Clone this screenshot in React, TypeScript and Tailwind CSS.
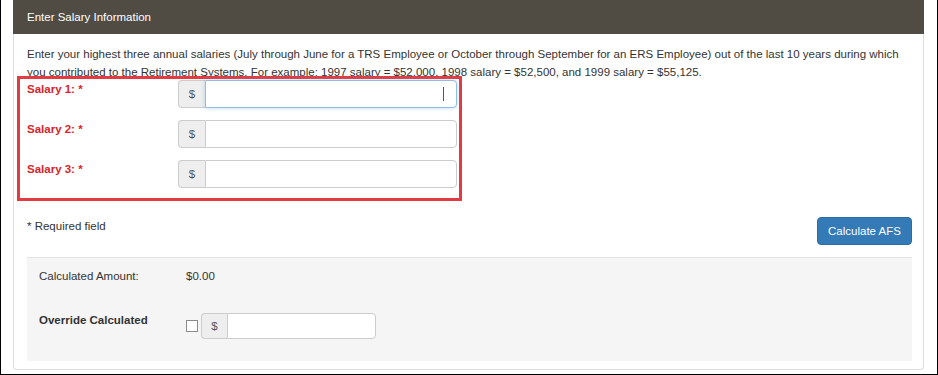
import React from "react";

function Group({
  width,
  addonW,
  height,
  focus,
}: {
  width: number;
  addonW: number;
  height: number;
  focus?: boolean;
}) {
  return (
    <div className="flex" style={{ width, height }}>
      <div
        className="flex items-center justify-center bg-[#eeeeee] border border-r-0 border-[#cccccc] rounded-l-[4px] text-[#555555] text-[11.5px]"
        style={{ width: addonW }}
      >
        $
      </div>
      <div
        className={
          "flex-1 rounded-r-[4px] bg-white border flex items-center justify-end pr-[12px] " +
          (focus
            ? "border-[#8fbde6] shadow-[0_0_4px_rgba(102,175,233,0.45)]"
            : "border-[#cccccc]")
        }
      >
        {focus && <div className="w-[1px] h-[14px] bg-[#555555]" />}
      </div>
    </div>
  );
}

export default function App() {
  const rows = ["Salary 1: *", "Salary 2: *", "Salary 3: *"];
  return (
    <div className="w-[938px] h-[375px] bg-white border-l border-r border-b border-black font-['Liberation_Sans',Arial,sans-serif] text-[11.5px] leading-[18px] text-[#333333] overflow-hidden">
      <div className="ml-[12px] w-[911px]">
        <div className="h-[34px] bg-[#504c44] px-[14px] flex items-center text-white">
          Enter Salary Information
        </div>
        <div className="border-x border-b border-[#dddddd] rounded-b-[4px] pl-[13px] pr-[11px] pt-[11px] pb-[8px]">
          <p>
            Enter your highest three annual salaries (July through June for a TRS Employee or October through
            September for an ERS Employee) out of the last 10 years during which
            <br />
            you contributed to the Retirement Systems. For example: 1997 salary = $52,000, 1998 salary = $52,500,
            and 1999 salary = $55,125.
          </p>
          <div className="relative ml-[-10px] mt-[-5px] w-[445px] border-[3px] border-[#e23b41] pl-[7px] pr-[2px] pt-[1px] pb-[10px] flex flex-col gap-[12px]">
            {rows.map((r, i) => (
              <div key={r} className="flex items-start h-[28px]">
                <div className="w-[151px] font-bold text-[#dc2229]">{r}</div>
                <Group width={279} addonW={27} height={28} focus={i === 0} />
              </div>
            ))}
          </div>
          <div className="mt-[16px] flex items-start justify-between h-[28px]">
            <div>* Required field</div>
            <button className="w-[95px] h-[28px] rounded-[4px] bg-[#337ab7] border border-[#2e6da4] text-white text-[11.5px] flex items-center justify-center">
              Calculate AFS
            </button>
          </div>
          <div className="mt-[12px] bg-[#f5f5f5] border-t border-[#e3e3e3] pl-[12px] pt-[9px] pb-[22px]">
            <div className="flex h-[18px]">
              <div className="w-[147px]">Calculated Amount:</div>
              <div>$0.00</div>
            </div>
            <div className="flex items-start mt-[28px]">
              <div className="w-[147px] font-bold mt-[-2px]">Override Calculated</div>
              <div className="flex items-center gap-[3px]">
                <div className="w-[12px] h-[12px] border border-[#8a8a8a] bg-white" />
                <Group width={175} addonW={26} height={26} />
              </div>
            </div>
          </div>
        </div>
      </div>
    </div>
  );
}
